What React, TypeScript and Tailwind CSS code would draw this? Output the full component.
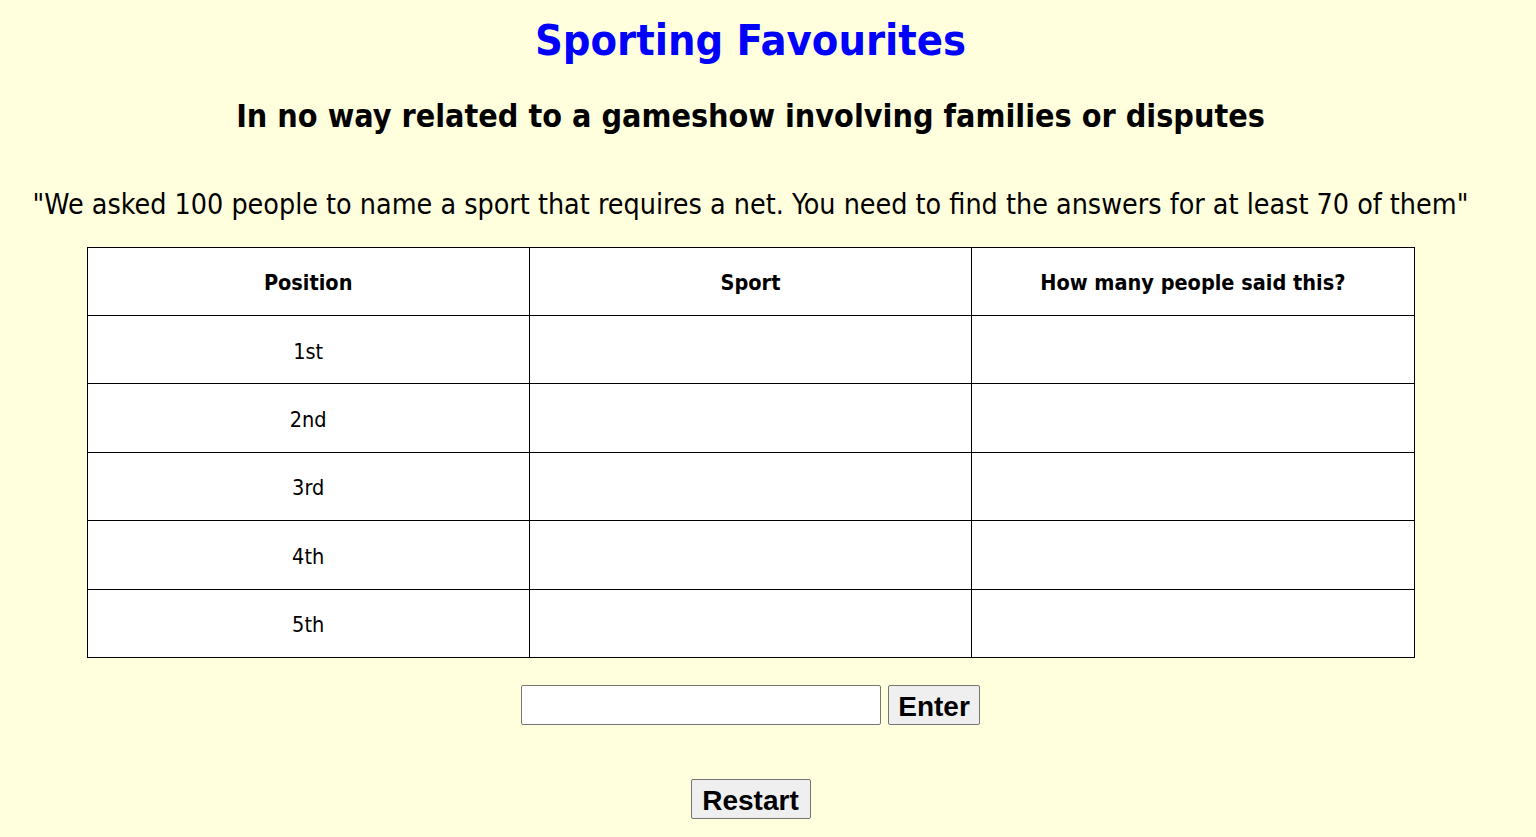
import React from "react";

const rows = ["1st", "2nd", "3rd", "4th", "5th"];

export default function App() {
  return (
    <div className="min-h-[837px] bg-[#ffffdd] text-black font-['DejaVu_Sans_Condensed','DejaVu_Sans',sans-serif]">
      <div className="flex w-[1501px] flex-col items-center">
        <h1 className="mt-[14px] h-[52px] leading-[52px] text-[43px] font-bold text-[#0000ff]">Sporting Favourites</h1>
        <h2 className="mt-[28px] h-[44px] leading-[44px] text-[32px] font-bold whitespace-nowrap">In no way related to a gameshow involving families or disputes</h2>
        <p className="mt-[47px] h-[40px] leading-[40px] text-[28.4px] whitespace-nowrap">"We asked 100 people to name a sport that requires a net. You need to find the answers for at least 70 of them"</p>
        <table className="mt-[22px] w-[1328px] border-collapse bg-white text-[21.5px]">
          <thead>
            <tr className="h-[68px]">
              <th className="w-1/3 border border-black pt-[4px] font-bold">Position</th>
              <th className="w-1/3 border border-black pt-[4px] font-bold">Sport</th>
              <th className="w-1/3 border border-black pt-[4px] font-bold">How many people said this?</th>
            </tr>
          </thead>
          <tbody>
            {rows.map((r) => (
              <tr key={r} className="h-[68.4px]">
                <td className="border border-black pt-[4px] text-center">{r}</td>
                <td className="border border-black"></td>
                <td className="border border-black"></td>
              </tr>
            ))}
          </tbody>
        </table>
        <div className="mt-[27px] flex items-center gap-[7px] font-['Liberation_Sans',Arial,sans-serif]">
          <input type="text" className="h-[40px] w-[360px] rounded-[2px] border border-[#767676] bg-white px-2 text-[26px]" />
          <button className="h-[40px] w-[92px] rounded-[2px] border border-[#767676] bg-[#efefef] text-[28px] font-bold">Enter</button>
        </div>
        <button className="mt-[54px] h-[40px] w-[120px] rounded-[2px] border border-[#767676] bg-[#efefef] text-[28px] font-bold font-['Liberation_Sans',Arial,sans-serif]">Restart</button>
      </div>
    </div>
  );
}
